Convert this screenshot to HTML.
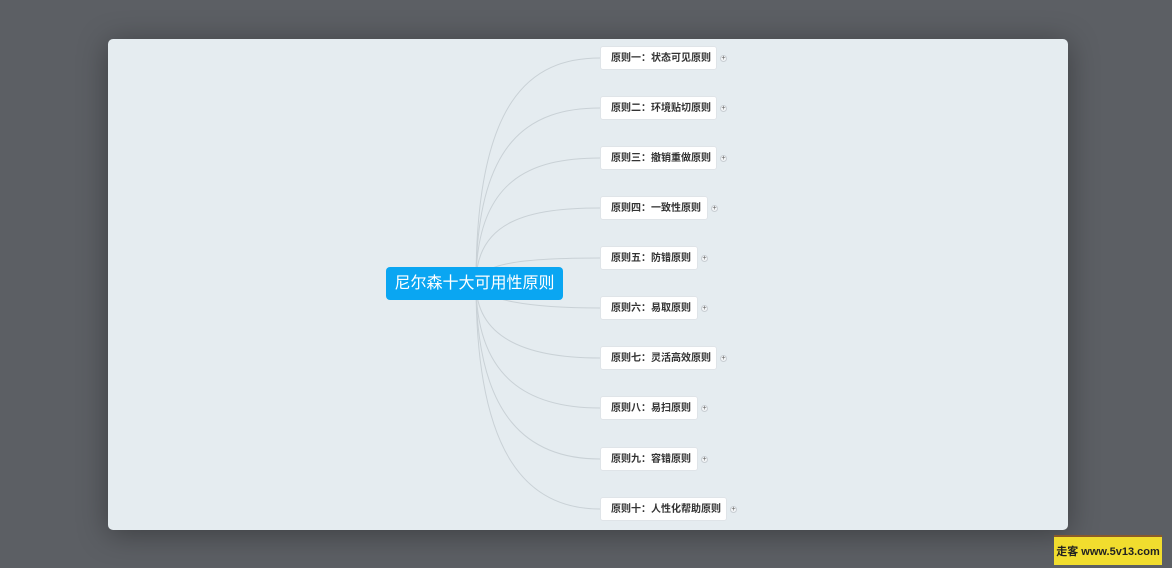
<!DOCTYPE html>
<html><head><meta charset="utf-8"><style>
html,body{margin:0;width:1172px;height:568px;overflow:hidden}
body{background:#5c5f64;font-family:"Liberation Sans","Noto Sans CJK SC",sans-serif;position:relative}
.panel{position:absolute;left:108px;top:39px;width:960px;height:491px;background:#e5ecf0;border-radius:5px;box-shadow:0 4px 30px rgba(0,0,0,.35)}
.root{position:absolute;left:386px;top:267px;width:177px;height:33px;background:#0aa6f2;border-radius:4px;color:#fff;font-size:16px;line-height:33px;text-align:center}
.n{position:absolute;left:600px;height:24px;background:#fff;border:1px solid #dfe4e8;border-radius:3px;box-sizing:border-box;font-size:10px;font-weight:bold;color:#333;line-height:23px;padding-left:10px;white-space:nowrap}
.p{position:absolute;width:7px;height:7px;border-radius:50%;background:#f4f6f8;border:1px solid #c8ced3;font-size:7px;line-height:6px;text-align:center;color:#555;box-sizing:border-box}
.badge{position:absolute;left:1054px;top:535px;width:108px;height:30px;background:#f1dd2e;font-size:11px;font-weight:bold;color:#222;line-height:30px;text-align:center;border-top:2px solid #8a5a2a;white-space:nowrap;box-sizing:border-box}
</style></head><body>
<div class="panel"></div>
<svg width="1172" height="568" style="position:absolute;left:0;top:0" fill="none" stroke="#c9d1d6" stroke-width="1">
<path d="M476 283 C476 100 530 58 600 58"/>
<path d="M476 283 C476 140 530 108 600 108"/>
<path d="M476 283 C476 180 530 158 600 158"/>
<path d="M476 283 C476 220 530 208 600 208"/>
<path d="M476 283 C480 262 530 258 600 258"/>
<path d="M476 283 C480 300 530 308 600 308"/>
<path d="M476 283 C476 340 530 358 600 358"/>
<path d="M476 283 C476 380 530 408 600 408"/>
<path d="M476 283 C476 420 530 459 600 459"/>
<path d="M476 283 C476 460 530 509 600 509"/>
</svg>
<div class="root">尼尔森十大可用性原则</div>
<div class="n" style="top:46px;width:117px">原则一：状态可见原则</div><div class="p" style="left:720px;top:55px">+</div>
<div class="n" style="top:96px;width:117px">原则二：环境贴切原则</div><div class="p" style="left:720px;top:105px">+</div>
<div class="n" style="top:146px;width:117px">原则三：撤销重做原则</div><div class="p" style="left:720px;top:155px">+</div>
<div class="n" style="top:196px;width:108px">原则四：一致性原则</div><div class="p" style="left:711px;top:205px">+</div>
<div class="n" style="top:246px;width:98px">原则五：防错原则</div><div class="p" style="left:701px;top:255px">+</div>
<div class="n" style="top:296px;width:98px">原则六：易取原则</div><div class="p" style="left:701px;top:305px">+</div>
<div class="n" style="top:346px;width:117px">原则七：灵活高效原则</div><div class="p" style="left:720px;top:355px">+</div>
<div class="n" style="top:396px;width:98px">原则八：易扫原则</div><div class="p" style="left:701px;top:405px">+</div>
<div class="n" style="top:447px;width:98px">原则九：容错原则</div><div class="p" style="left:701px;top:456px">+</div>
<div class="n" style="top:497px;width:127px">原则十：人性化帮助原则</div><div class="p" style="left:730px;top:506px">+</div>
<div class="badge">走客 www.5v13.com</div>
</body></html>
